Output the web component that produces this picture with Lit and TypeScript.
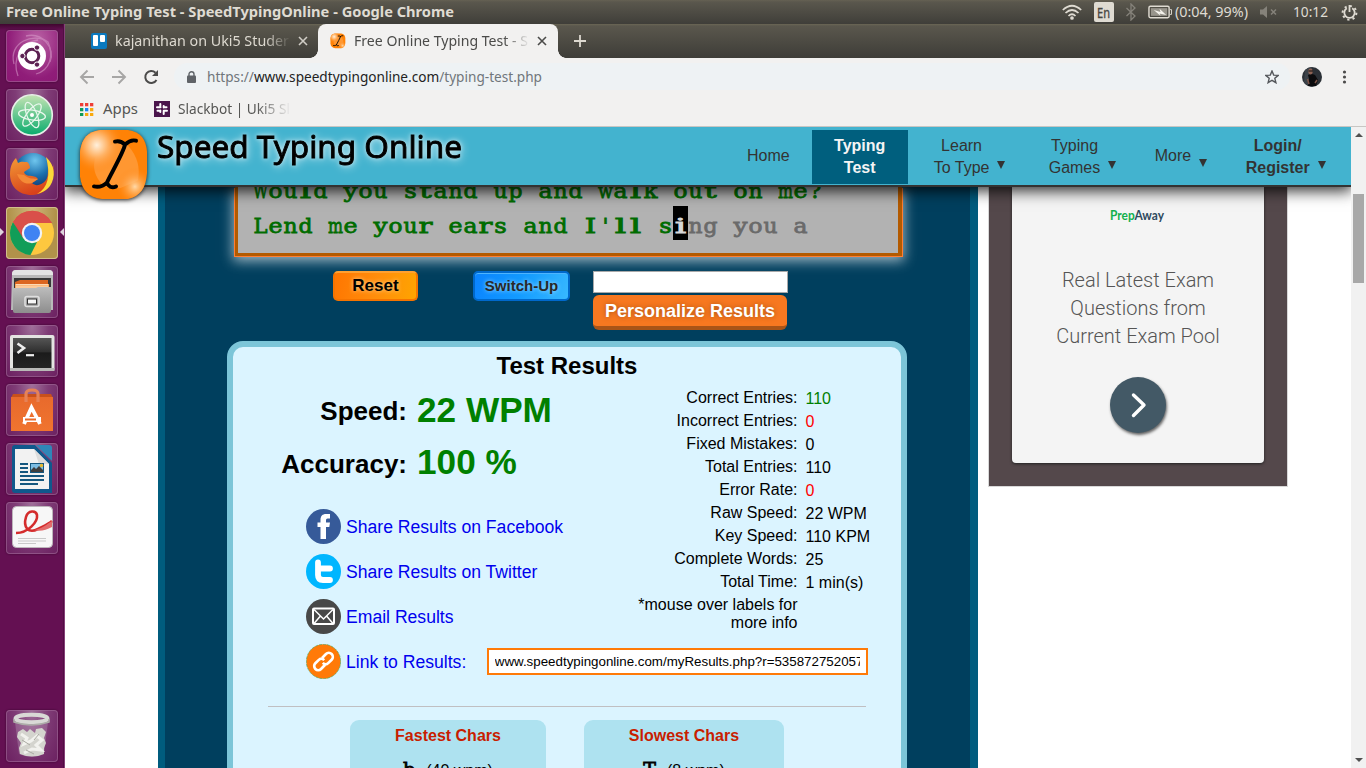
import { LitElement, html, css, svg } from "lit";
import { customElement } from "lit/decorators.js";

/** Single line of text set to an exact advance width. */
const fit = (
  text: unknown,
  width: number,
  size: number,
  cls = "",
  height = 24,
  base = 17
) => html`<svg class="fit ${cls}" width=${width + 2} height=${height}>
  <text x="0" y=${base} font-size=${size} textLength=${width} lengthAdjust="spacingAndGlyphs">${text}</text>
</svg>`;

const cursorLogo = (size: number) => html`<svg width=${size} height=${size} viewBox="0 0 72 76" preserveAspectRatio="none">
  <defs>
    <radialGradient id="lg1" cx=".25" cy=".22" r=".4"><stop offset="0" stop-color="#fff0dc"/><stop offset=".4" stop-color="#ffb56a"/><stop offset="1" stop-color="#ff8410" stop-opacity="0"/></radialGradient>
    <radialGradient id="lg2" cx=".82" cy=".82" r=".28"><stop offset="0" stop-color="#ffd9a8"/><stop offset="1" stop-color="#ff8410" stop-opacity="0"/></radialGradient>
  </defs>
  <path d="M22 2H50C63 4 68 12 69 24V46C68 62 62 70 50 73H24C10 71 4 64 2 50V24C4 10 10 4 22 2Z" fill="#ff8206"/>
  <path d="M50 18C60 30 62 40 60 54L42 62L26 60C16 50 14 40 18 28L38 14Z" fill="#ffa348" opacity=".65"/>
  <path d="M22 2H50C63 4 68 12 69 24V46C68 62 62 70 50 73H24C10 71 4 64 2 50V24C4 10 10 4 22 2Z" fill="url(#lg1)"/>
  <path d="M22 2H50C63 4 68 12 69 24V46C68 62 62 70 50 73H24C10 71 4 64 2 50V24C4 10 10 4 22 2Z" fill="url(#lg2)"/>
  <g fill="none" stroke="#000" stroke-width="4" stroke-linecap="round"><path d="M37 14C41 13 45 15 47 17C50 14 54 12 58 13M47 17C46 24 33 47 29 56M16 60C21 61 26 59 29 56C30 60 34 62 38 60"/></g>
</svg>`;

const tileIcons = [
  // dash
  html`<svg viewBox="0 0 52 52"><g fill="none" stroke="#d99ccb" stroke-width="1.3" opacity=".55"><path d="M8 34C2 12 28 2 42 12C48 26 44 40 30 44"/><path d="M12 46C6 30 14 12 32 10M20 6C36 2 50 18 44 32"/></g><circle cx="26" cy="26" r="14" fill="#fff"/><circle cx="26" cy="26" r="6.8" fill="none" stroke="#5c2152" stroke-width="3"/><g fill="#5c2152" stroke="#fff" stroke-width="1"><circle cx="16.4" cy="26" r="2.7"/><circle cx="31" cy="17.6" r="2.7"/><circle cx="31" cy="34.6" r="2.7"/></g></svg>`,
  // atom
  html`<svg viewBox="0 0 52 52"><defs><linearGradient id="at" x2="0" y2="1"><stop stop-color="#c5e4b4"/><stop offset="1" stop-color="#08ab6c"/></linearGradient></defs><circle cx="26" cy="26" r="20.3" fill="url(#at)" stroke="#e8efe8" stroke-width="1.6"/><g fill="none" stroke="#e9f7ed" stroke-width="1.3"><ellipse cx="26" cy="26" rx="13.5" ry="5" transform="rotate(8 26 26)"/><ellipse cx="26" cy="26" rx="13.5" ry="5" transform="rotate(68 26 26)"/><ellipse cx="26" cy="26" rx="13.5" ry="5" transform="rotate(128 26 26)"/></g><circle cx="26" cy="26" r="2" fill="#fff"/></svg>`,
  // firefox
  html`<svg viewBox="0 0 52 52"><defs><radialGradient id="ffb" cx=".55" cy=".2" r=".8"><stop stop-color="#6fc6ee"/><stop offset=".5" stop-color="#1c70ad"/><stop offset="1" stop-color="#0c2c66"/></radialGradient><linearGradient id="ffo" x2=".4" y2="1"><stop stop-color="#f39a35"/><stop offset="1" stop-color="#d8411b"/></linearGradient></defs><circle cx="27" cy="24" r="19" fill="url(#ffb)"/><path d="M47 16C50 32 42 47 26 47C12 47 4 38 4 26C4 19 6 14 10 10L12 15C15 13 18 14 21 14C23 15 24 18 24 20L18 24C19 29 25 27 30 29L32 31L26 35C30 39 36 37 40 32C43 28 42 18 41 11C44 14 46 17 47 20Z" fill="url(#ffo)"/><path d="M40 9C49 17 50 29 44 38C40 43 35 45 31 46C42 40 45 27 40 9Z" fill="#fbd83a"/><path d="M11 26C14 34 20 37 26 35L32 31C28 30 24 32 18 27Z" fill="#f58a36"/></svg>`,
  // chrome
  html`<svg viewBox="0 0 52 52"><circle cx="26" cy="26" r="22" fill="#fdc83f"/><path d="M26 26L15.4 32L7 15A22 22 0 0 1 46 16H26Z" fill="#d74b40"/><path d="M7 15L17 31L26 36L31 35L24.5 48A22 22 0 0 1 7 15Z" fill="#119d58"/><path d="M26 4A22 22 0 0 1 46 16H26C19 16 15 21 15 26L7 15A22 22 0 0 1 26 4Z" fill="#d9504a"/><circle cx="26" cy="26" r="10.2" fill="#f1f3f5"/><circle cx="26" cy="26" r="8" fill="#3f83f3"/></svg>`,
  // files
  html`<svg viewBox="0 0 52 52"><defs><linearGradient id="fi" x2="0" y2="1"><stop stop-color="#bdbdbd"/><stop offset="1" stop-color="#8d8d8d"/></linearGradient></defs><path d="M6 8Q6 4 10 4H43Q47 4 47 8V44H5Z" fill="#b9b9b9"/><path d="M6 8Q6 4 10 4H43Q47 4 47 8V9H6Z" fill="#e4e4e4"/><path d="M8 12H45V24H8Z" fill="#383838"/><path d="M9 16L14 14H42V24H9Z" fill="#db6621"/><path d="M9 18H43V24H9Z" fill="#f9a55a"/><path d="M10 18.8H42M10 21H42" stroke="#fff0dc"/><path d="M7 22H30L32 21H45V45Q45 47 43 47H9Q7 47 7 45Z" fill="url(#fi)"/><rect x="19" y="30.5" width="14" height="10" rx="2" fill="none" stroke="#dedede" stroke-width="1.6"/><rect x="21.5" y="33" width="9" height="5" fill="#f6f6f6" stroke="#333"/></svg>`,
  // terminal
  html`<svg viewBox="0 0 52 52"><defs><linearGradient id="te" x2="0" y2="1"><stop stop-color="#555"/><stop offset=".45" stop-color="#303030"/><stop offset=".5" stop-color="#1b1b1b"/><stop offset="1" stop-color="#242424"/></linearGradient></defs><rect x="4" y="10" width="44.500" height="36" rx="2" fill="#e4e4e2"/><rect x="4" y="43" width="44.500" height="3" fill="#b9b9b7"/><rect x="7" y="13" width="38.500" height="30" fill="url(#te)"/><path d="M11.500 18.500L18 23L11.500 28" fill="none" stroke="#eee" stroke-width="2.600"/><path d="M20 30.200H28" stroke="#eee" stroke-width="2.200"/></svg>`,
  // software
  html`<svg viewBox="0 0 52 52"><defs><linearGradient id="so" x2="0" y2="1"><stop stop-color="#e86a2c"/><stop offset="1" stop-color="#f0742f"/></linearGradient></defs><path d="M7 10H45L47 14V47H5V14Z" fill="#c8501b"/><path d="M5 13H47V47H5Z" fill="url(#so)"/><path d="M20 18V10Q20 6 26 6T32 10V18" fill="none" stroke="#e68257" stroke-width="3.200"/><path d="M18 40L25.500 23.500L34 40" fill="none" stroke="#fff" stroke-width="3.800"/><path d="M17 35.500H35" stroke="#fff" stroke-width="5"/><path d="M19 35.500H30" stroke="#e96a2a" stroke-width="2"/></svg>`,
  // writer
  html`<svg viewBox="0 0 52 52"><path d="M9 2H29L46 20V50H9Q6 50 6 47V5Q6 2 9 2Z" fill="#10588c"/><path d="M30 2H43Q46 2 46 5V18Z" fill="#2f86b8"/><path d="M9 6H28L43 21V46H9Z" fill="#f2f2f2"/><path d="M28 6L43 21H33Z" fill="#dcdcdc"/><g stroke="#15577f" stroke-width="2"><path d="M14 21H22M14 25H22M14 29H22M14 33H38M14 37H38M14 41H32"/></g><rect x="24.500" y="20.500" width="13" height="9" fill="#7cbde4" stroke="#15577f"/><path d="M25 29V27L28 24L30 26L33 23L37 27V29Z" fill="#3e3e3e"/><circle cx="35.500" cy="22.500" r="1.700" fill="#e8b92d"/></svg>`,
  // document viewer
  html`<svg viewBox="0 0 52 52"><rect x="6.500" y="4.500" width="40" height="41" rx="4" fill="#f7f7f7" stroke="#bdb6bb"/><path d="M10 31C22 31 32 20 31 13C30 8 22 8 20 15C17 25 22 32 32 27C38 24 43 22 46 19" fill="none" stroke="#d42c2c" stroke-width="2.600"/><path d="M28 28C36 27 41 22 46 19V25C40 28 34 30 28 28Z" fill="#e36c6c"/><path d="M12 36.500H40M12 39H40M12 41.500H30" stroke="#c9c9c9" stroke-width="1.100"/></svg>`,
];

const trashIcon = html`<svg viewBox="0 0 52 52"><path d="M9 12L13 44Q26 50 38 44L42 12Z" fill="#c9b4c9" opacity=".28"/><path d="M12 22L17 19L21 22L24 19L29 23L30 19L36 18L40 22L38 28L40 33L38 38L38 44Q26 49 14 44L13 38L15 33L11 27Z" fill="#d4d4ce"/><path d="M15 24L21 28L18 34L25 31L31 26L36 30L30 35L35 40L26 39L18 43" fill="none" stroke="#f2f2ee" stroke-width="3"/><path d="M16 30L24 35M33 24L28 30M20 40L28 44" stroke="#aaaaa2"/><ellipse cx="25.500" cy="8.500" rx="16" ry="3.800" fill="none" stroke="#d9d9d6" stroke-width="4"/><path d="M8 9V12Q25 18 43 12V9" fill="none" stroke="#adada9" stroke-width="1.500"/></svg>`;

@customElement("desktop-panel")
class DesktopPanel extends LitElement {
  static styles = css`
    :host { display: flex; align-items: center; height: 24px; box-sizing: border-box; padding: 0 8px 0 6px;
      background: linear-gradient(#656153 0, #5a574d 2px, #3f3e39); color: #dfdbd2; font: 15px "Noto Sans", sans-serif; }
    svg { display: block; flex: none; }
    .fit { fill: #dfdbd2; overflow: visible; }
    .title { font-weight: 700; }
    .space { flex: 1; }
    .lang { width: 20px; height: 20px; border-radius: 2px; background: #dfdbd2; margin: 0 11px 0 12px; }
    .lang .fit { fill: #47453f; margin-left: 3px; stroke: #47453f; stroke-width: .3px; }
    .battery { margin: 0 3px 0 11px; }
    .mute { margin: 0 14px 0 9px; }
    .gear { margin-left: 11px; }
  `;
  render() {
    return html`${fit("Free Online Typing Test - SpeedTypingOnline - Google Chrome", 448, 15, "title")}
      <div class="space"></div>
      <svg width="20" height="16" viewBox="0 0 20 16" fill="none" stroke="#dfdbd2" stroke-width="1.7"><path d="M.8 6Q10-2.500 19.200 6M3.500 9Q10 3 16.500 9M6.500 12Q10 8.500 13.500 12"/><circle cx="10" cy="14" r="1" fill="#dfdbd2"/></svg>
      <div class="lang">${fit("En", 13, 14, "", 20, 15.5)}</div>
      <svg width="12" height="18" viewBox="0 0 12 18" fill="none" stroke="#85827a" stroke-width="1.300"><path d="M1.500 5L10 13L6 17V1L10 5L1.500 13"/></svg>
      <svg class="battery" width="24" height="14" viewBox="0 0 25 14"><rect x="1" y="1" width="21" height="12" rx="1.500" fill="none" stroke="#dfdbd2" stroke-width="1.500"/><path d="M23 4.500H24.500V9.500H23" fill="none" stroke="#dfdbd2"/><rect x="3" y="3" width="17" height="8" fill="#98958c"/><path d="M6 5L13 7L12 3.500L19 10L12 8.500L13 11Z" fill="#f4f2ec"/></svg>
      ${fit("(0:04, 99%)", 73, 15)}
      <svg class="mute" width="20" height="14" viewBox="0 0 20 14"><path d="M1 4.500H4L8 1V13L4 9.500H1Z" fill="#85827a"/><path d="M12 4.500L17 9.500M17 4.500L12 9.500" stroke="#85827a" stroke-width="1.500"/></svg>
      ${fit("10:12", 35, 15)}
      <svg class="gear" width="17" height="17" viewBox="0 0 17 17" fill="none" stroke="#dfdbd2"><path d="M5.800 4.300A5.200 5.200 0 1 0 11.200 4.300" stroke-width="1.800"/><circle cx="8.500" cy="8.800" r="6.900" stroke-width="2" stroke-dasharray="2.200 3.220"/><path d="M8.500 1V8" stroke-width="1.800"/></svg>`;
  }
}

@customElement("app-launcher")
class AppLauncher extends LitElement {
  static styles = css`
    :host { display: flex; flex-direction: column; gap: 7px; width: 65px; box-sizing: border-box; padding: 6px 0 6px 6px; border-right: 1px solid #863f78;
      background: linear-gradient(#40072f 0, #641052 6px, #641052 100%); box-shadow: inset -1px 0 #510d43; }
    .tile { width: 52px; height: 52px; box-sizing: border-box; border-radius: 4px; position: relative; flex: none;
      background: radial-gradient(ellipse at 50% 0, #a0709a 0, #7f3c76 45%, #6b2060 100%); box-shadow: inset 0 0 0 1px #a36e9a90, 0 0 2px #35062b; }
    .tile svg { display: block; width: 52px; height: 52px; }
    .dash { background: radial-gradient(ellipse at 60% 20%, #ba62a5, #901d79 65%, #8b1773); }
    .active { background: radial-gradient(ellipse at 50% 0, #cfb77d, #b1924a 65%); box-shadow: inset 0 0 0 1px #d1bd8c; }
    .active::before, .active::after { content: ""; position: absolute; top: 21px; border: 4.5px solid transparent; }
    .active::before { left: -6px; border-left-color: #ded4dd; border-right-width: 0; }
    .active::after { right: -6px; border-right-color: #ded4dd; border-left-width: 0; }
    .space { flex: 1; }
  `;
  render() {
    return html`${tileIcons.map((icon, i) => html`<div class="tile ${i === 0 ? "dash" : i === 3 ? "active" : ""}">${icon}</div>`)}
      <div class="space"></div><div class="tile">${trashIcon}</div>`;
  }
}

const closeX = (c: string) => html`<svg width="10" height="10" viewBox="0 0 10 10"><path d="M1 1L9 9M9 1L1 9" stroke=${c} stroke-width="1.600"/></svg>`;

@customElement("browser-chrome")
class BrowserChrome extends LitElement {
  static styles = css`
    :host { display: block; height: 103px; box-sizing: border-box; background: #f2f1f0; border-bottom: 1px solid #c8c6c3; font-family: "Noto Sans", sans-serif; }
    svg { display: block; flex: none; }
    .fit { overflow: visible; }
    .tabs { display: flex; height: 34px; align-items: center; background: linear-gradient(#6b6655 0, #5a574d 2px, #3e3d38); }
    .tab { display: flex; align-items: center; height: 34px; box-sizing: border-box; }
    .idle { width: 253px; padding-left: 26px; fill: #ddd9d0; }
    .clip { overflow: hidden; margin-left: 8px; width: 175px; mask-image: linear-gradient(90deg, #000 150px, transparent 176px); }
    .idle .clip { margin-right: 7px; width: 176px; }
    .current { width: 240px; padding-left: 12px; background: #f2f1f0; border-radius: 8px 8px 0 0; fill: #4b4b49; position: relative; }
    .current .clip { width: 176px; margin-right: 7px; }
    .current::before, .current::after { content: ""; position: absolute; bottom: 0; width: 8px; height: 8px; }
    .current::before { left: -8px; background: radial-gradient(circle at 0 0, transparent 7.5px, #f2f1f0 8px); }
    .current::after { right: -8px; background: radial-gradient(circle at 100% 0, transparent 7.5px, #f2f1f0 8px); }
    .plus { margin-left: 16px; }
    .bar { display: flex; align-items: center; height: 37px; padding-left: 14px; }
    .nav { margin-left: 16px; }
    .omni { display: flex; align-items: center; width: 1116px; height: 27px; box-sizing: border-box; border-radius: 14px; background: #eef2f4; margin-left: 15px; padding: 0 11px 0 13px; fill: #70767b; }
    .omni .fit { margin-left: 11px; }
    .space { flex: 1; }
    .host { fill: #222; }
    .avatar { margin-left: 12px; }
    .dots { margin-left: 20px; }
    .marks { display: flex; align-items: center; height: 28px; padding-left: 15px; fill: #555553; }
    .marks .clip { width: 112px; mask-image: linear-gradient(90deg, #000 78px, transparent 113px); }
    .apps { margin-right: 9px; }
    .slack { margin-left: 14px; }
  `;
  render() {
    const colors = ["#ee3e37", "#ee3e37", "#ee3e37", "#0f9b58", "#1b87f3", "#f9a90d", "#0f9b58", "#f9a90d", "#f9a90d"];
    return html`<div class="tabs">
        <div class="tab idle">
          <svg width="16" height="16"><rect width="16" height="16" rx="2" fill="#0a79bf"/><rect x="2" y="2" width="5" height="11" rx="1" fill="#fff"/><rect x="9" y="2" width="5" height="7" rx="1" fill="#fff"/></svg>
          <div class="clip">${fit("kajanithan on Uki5 Studer", 174, 14.6)}</div>${closeX("#d0cdc6")}
        </div>
        <div class="tab current">${cursorLogo(16)}<div class="clip">${fit("Free Online Typing Test - S", 174, 14.6)}</div>${closeX("#4b4b49")}</div>
        <svg class="plus" width="12" height="12"><path d="M6 0V12M0 6H12" stroke="#ddd9d0" stroke-width="1.800"/></svg>
      </div>
      <div class="bar">
        <svg width="16" height="16" fill="none" stroke="#a7a6a5" stroke-width="1.900"><path d="M15 8H2M8.500 1.500L2 8L8.500 14.500"/></svg>
        <svg class="nav" width="16" height="16" fill="none" stroke="#a7a6a5" stroke-width="1.900"><path d="M1 8H14M7.500 1.500L14 8L7.500 14.500"/></svg>
        <svg class="nav" width="16" height="16"><path d="M13.500 11A6 6 0 1 1 12.500 3.700" fill="none" stroke="#4c4b4a" stroke-width="2"/><path d="M15 1V7H9Z" fill="#4c4b4a"/></svg>
        <div class="omni">
          <svg width="9" height="12"><rect x="0" y="4.500" width="9" height="7.500" rx="1" fill="#5f6368"/><path d="M2 5V3.200A2.500 2.500 0 0 1 7 3.200V5" fill="none" stroke="#5f6368" stroke-width="1.400"/></svg>
          ${fit(svg`https://<tspan class="host">www.speedtypingonline.com</tspan>/typing-test.php`, 335, 14.4)}
          <div class="space"></div>
          <svg width="14" height="14" viewBox="0 0 14 14"><path d="M7 1L8.700 5.100L13.200 5.400L9.800 8.300L10.900 12.700L7 10.300L3.100 12.700L4.200 8.300L.8 5.400L5.300 5.100Z" fill="none" stroke="#54575b" stroke-width="1.400"/></svg>
        </div>
        <svg class="avatar" width="20" height="20"><circle cx="10" cy="10" r="10" fill="#2b3036"/><path d="M3 3Q7 0 10 0V20Q4 18 2 15Z" fill="#3b4148"/><path d="M6 8Q9 6 13 8L16 13L14 19H6L7 12Z" fill="#0b0b0d"/><ellipse cx="8.500" cy="4.500" rx="2.200" ry="2.900" fill="#8d6254"/><path d="M6.500 4H11" stroke="#111"/><path d="M5.500 12L7 17M15 13L13 16" stroke="#7c5347" stroke-width="1.500"/></svg>
        <svg class="dots" width="5" height="14" fill="#4c4b4a"><circle cx="2.500" cy="2" r="1.600"/><circle cx="2.500" cy="7" r="1.600"/><circle cx="2.500" cy="12" r="1.600"/></svg>
      </div>
      <div class="marks">
        <svg class="apps" width="14" height="13">${colors.map((c, i) => svg`<rect x=${(i % 3) * 5} y=${Math.floor(i / 3) * 5} width="3.300" height="3.300" fill=${c}/>`)}</svg>
        ${fit("Apps", 35, 14.6)}
        <svg class="slack" width="16" height="16"><rect width="16" height="16" fill="#4a154b"/><g stroke="#fff" stroke-width="2" stroke-linecap="round"><path d="M6.300 3V6M9.700 5V6.500M6.300 9.500V11M9.700 10V13M3 6.300H6.500M5 9.700H3.500M9.700 6.300H12.500M9.700 9.700H13M6.300 9.700H6.400"/></g></svg>
        <div class="clip">${fit("Slackbot | Uki5 Sl", 112, 14.6)}</div>
      </div>`;
  }
}

@customElement("site-header")
class SiteHeader extends LitElement {
  static styles = css`
    :host { display: flex; position: relative; z-index: 2; height: 60px; box-sizing: border-box; background: #43b3cf; border-bottom: 2px solid #333;
      box-shadow: 0 3px 14px 1px #000000d0; clip-path: inset(0 0 -30px 0); font: 16px/22px "Liberation Sans", Arial, sans-serif; color: #333; }
    .logo { position: absolute; left: 13px; top: 1px; filter: drop-shadow(0 1px 2px #222); }
    .logo svg { display: block; width: 72px; height: 74px; }
    .name { margin: 0 0 0 92px; width: 307px; flex: none; font-family: "Noto Sans", sans-serif; filter: drop-shadow(0 0 2px #ffffff90) drop-shadow(1px 1px 4px #ffffff90); height: 45px; }
    .fit { display: block; overflow: visible; fill: #000; stroke: #000; stroke-width: .9px; }
    nav { display: flex; align-items: center; flex: 1; text-align: center; padding: 2px 0 0 283px; }
    nav > div { flex: none; }
    .home { margin-top: -2px; }
    .on { width: 96px; height: 54px; padding-top: 5px; box-sizing: border-box; background: #005f7e; color: #f4f4f4; font-weight: 700; margin: 0 26px 0 22px; }
    .item { display: flex; align-items: flex-end; white-space: pre; }
    .learn { width: 115px; }
    .games { width: 106px; }
    .more { width: 91px; margin-top: -2px; }
    .arrow { width: 0; height: 0; border: 4.5px solid transparent; border-top: 8px solid #333; border-bottom: 0; margin: 0 0 10px 8px; }
    .low { margin-bottom: 0; }
    .bold { font-weight: 700; }
  `;
  render() {
    return html`<div class="logo">${cursorLogo(72)}</div>
      <div class="name">${fit("Speed Typing Online", 305, 31, "", 45, 31)}</div>
      <nav>
        <div class="home">Home</div>
        <div class="on">Typing<br>Test</div>
        <div class="item learn"><span>Learn<br>To Type</span><i class="arrow"></i></div>
        <div class="item games"><span>Typing<br>Games</span><i class="arrow"></i></div>
        <div class="item more"><span>More</span><i class="arrow low"></i></div>
        <div class="item bold"><span>Login/<br>Register</span><i class="arrow"></i></div>
      </nav>`;
  }
}

const shareRows = [
  { label: "Share Results on Facebook", icon: svg`<circle cx="17.500" cy="17.500" r="17.500" fill="#365a99"/><path d="M14.500 30V18H11.500V13.500H14.500V11C14.500 7 16.500 5 20 5H24V9.500H21.500Q20 9.500 20 11V13.500H24L23.300 18H20V30Z" fill="#fff"/>` },
  { label: "Share Results on Twitter", icon: svg`<circle cx="17.500" cy="17.500" r="17.500" fill="#00b6ff"/><path d="M12 8.500V21Q12 26 17 26H24M12 14.500H24" fill="none" stroke="#fff" stroke-width="5.800" stroke-linecap="round"/>` },
  { label: "Email Results", icon: svg`<circle cx="17.500" cy="17.500" r="17.500" fill="#484848"/><rect x="7" y="9.500" width="21" height="15.500" rx="1" fill="none" stroke="#fff" stroke-width="2"/><path d="M8 10.500L17.500 20L27 10.500M8 24.500L14 17.500M27 24.500L21 17.500" fill="none" stroke="#fff" stroke-width="1.500"/>` },
  { label: "Link to Results:", icon: svg`<circle cx="17.500" cy="17.500" r="17.200" fill="#ff7a08" stroke="#35b070" stroke-width=".6" stroke-dasharray="3 1"/><g fill="none" stroke="#fff" stroke-width="2.700" transform="rotate(-45 17.500 17.500)"><path d="M16 21H10.500A4 4 0 0 1 6.500 17V17A4 4 0 0 1 10.500 13H15Q19 13 19 17M19 14H24.500A4 4 0 0 1 28.500 18V18A4 4 0 0 1 24.500 22H20Q16 22 16 18"/></g>` },
];

const stats: [string, string, string][] = [
  ["Correct Entries:", "110", "good"], ["Incorrect Entries:", "0", "bad"], ["Fixed Mistakes:", "0", ""],
  ["Total Entries:", "110", ""], ["Error Rate:", "0", "bad"], ["Raw Speed:", "22 WPM", ""],
  ["Key Speed:", "110 KPM", ""], ["Complete Words:", "25", ""], ["Total Time:", "1 min(s)", ""],
];

/** Typewriter cell: every character takes 15px, drawn at its own slab width. */
const CELL = 15;
const glyphWidth = (c: string) =>
  "mwWM".includes(c) ? 15 : "ilI?".includes(c) ? 11.5 : c === "'" ? 6 : "ts".includes(c) ? 12.5 : 14;
const typed = (s: string, from = 0) =>
  [...s].map((c, i) => {
    if (c === " ") return svg`<tspan x=${(from + i) * CELL}> </tspan>`;
    const w = glyphWidth(c);
    return svg`<tspan x=${(from + i) * CELL + (CELL - w) / 2} textLength=${w} lengthAdjust="spacingAndGlyphs">${c}</tspan>`;
  });

@customElement("typing-results")
class TypingResults extends LitElement {
  static styles = css`
    :host { display: block; width: 820px; height: 100%; box-sizing: border-box; border: solid #005c7e; border-width: 0 8px 0 7px; background: #003f5e;
      font: 16px "Liberation Sans", Arial, sans-serif; color: #000; }
    .typing { width: 667px; height: 69px; margin-left: 70px; box-sizing: border-box; border: solid #b35a00; border-width: 0 4px 3px 3px; background: #b2b2b2;
      padding-left: 15px; box-shadow: 0 1px 0 #ff7e33, -1px 1px 0 #ff7e33, 1px 1px 0 #ff7e33, 0 3px 12px 2px #ffffffa0; }
    .sheet { display: block; overflow: visible; font: 21px "DejaVu Serif", serif; fill: #006c00; stroke: #006c00; stroke-width: .8px; }
    .rest { fill: #6a6a6a; stroke: #6a6a6a; }
    .under { fill: #d8d8d8; stroke: #d8d8d8; }
    .caret { fill: #000; stroke: none; }
    .actions { display: flex; align-items: flex-start; padding: 15px 0 0 168px; height: 85px; box-sizing: border-box; }
    .btn { box-sizing: border-box; font-weight: 700; text-align: center; border-radius: 5px; }
    .reset { width: 85px; height: 30px; font-size: 17px; line-height: 25px; border: 2px solid #f57400; border-top-color: #ffa030; background: linear-gradient(100deg, #ff7600, #ff8d0c 50%, #ffa400); text-shadow: 0 0 4px #ffd9a0; }
    .switch { width: 97px; height: 30px; margin: 0 23px 0 55px; font-size: 15px; line-height: 26px; color: #282828; border: 2px solid #0069cc; background: linear-gradient(110deg, #0a83ff, #139bff 50%, #38b8ff); text-shadow: 0 0 4px #a8e0ff; box-shadow: inset 0 1px #4eb5ff; }
    .name { width: 195px; height: 22px; box-sizing: border-box; background: #fff; border: 1px solid #a9a9a9; }
    .personalize { width: 194px; height: 35px; margin-top: 2px; background: #f77820; color: #fff; border-bottom: 4px solid #a95417; font-size: 18px; line-height: 32px; text-shadow: 0 0 5px #a95417; border-radius: 6px; }
    .card { width: 680px; height: 460px; margin-left: 62px; box-sizing: border-box; border: 6px solid #7cc5d8; border-radius: 16px; background: #dbf4ff; }
    h1 { margin: 0; font-size: 24px; line-height: 28px; text-align: center; padding-top: 5px; height: 39px; box-sizing: border-box; }
    .cols { display: flex; height: 255px; }
    .left { width: 331px; margin-top: -2px; }
    .score { display: grid; grid-template-columns: 174px 1fr; column-gap: 10px; align-items: baseline; font-weight: 700; font-size: 26px; text-align: right; line-height: 52px; height: 52px; }
    .score span { position: relative; top: -2px; }
    .score + .score span { top: -1px; }
    .score b { font-size: 35.2px; color: #008000; text-align: left; }
    .shares { padding: 21px 0 0 73px; }
    .share { display: flex; align-items: center; gap: 5px; height: 35px; margin-bottom: 10px; font-size: 17.6px; color: #0000ee; white-space: nowrap; }
    .share > span { padding-top: 2px; }
    .share svg { display: block; flex: none; }
    .url { width: 381px; height: 27px; box-sizing: border-box; border: 2px solid #ff7a08; background: #fff; margin-left: 16px; padding: 0 5.5px; font-size: 13.333px; line-height: 23px; color: #000; flex: none; }
    .url span { display: block; overflow: hidden; width: 365.5px; }
    .right { width: 320px; }
    .stat { display: grid; grid-template-columns: 233.5px 1fr; column-gap: 8px; line-height: 23px; height: 23px; text-align: right; }
    .stat span:last-child { text-align: left; padding-top: 1px; }
    .good { color: #008000; } .bad { color: #f00; }
    .note { width: 233.5px; text-align: right; line-height: 18px; padding-top: 3px; }
    .rule { width: 598px; height: 1px; background: #c0bfc2; margin: 65px 0 13px 35px; }
    .panels { display: flex; gap: 38px; padding-left: 117px; }
    .panel { width: 196px; height: 90px; background: #aee2f0; border-radius: 9px; text-align: center; }
    .panel.wide { width: 200px; }
    .panel h2 { margin: 0; font-size: 16px; line-height: 32px; color: #c81e00; }
    .char { display: flex; align-items: baseline; justify-content: center; gap: 11px; padding-top: 3px; line-height: 28px; }
    .char b { font: 19px "DejaVu Serif", serif; -webkit-text-stroke: .8px #000; line-height: 28px; }
  `;
  render() {
    return html`<div class="typing"><svg class="sheet" width="643" height="66">
          <text y="11">${typed("Would you stand up and walk out on me?")}</text>
          <rect class="caret" x="420" y="19" width="15" height="34"/>
          <text y="46">${typed("Lend me your ears and I'll s")}<tspan class="under">${typed("i", 28)}</tspan><tspan class="rest">${typed("ng you a", 29)}</tspan></text>
        </svg></div>
      <div class="actions"><div class="btn reset">Reset</div><div class="btn switch">Switch-Up</div>
        <div><div class="name"></div><div class="btn personalize">Personalize Results</div></div></div>
      <div class="card"><h1>Test Results</h1>
        <div class="cols">
          <div class="left">
            <div class="score"><span>Speed:</span><b>22 WPM</b></div>
            <div class="score"><span>Accuracy:</span><b>100 %</b></div>
            <div class="shares">${shareRows.map((r, i) => html`<div class="share"><svg width="35" height="35">${r.icon}</svg><span>${r.label}</span>${i === 3 ? html`<div class="url"><span>www.speedtypingonline.com/myResults.php?r=535872752057</span></div>` : ""}</div>`)}</div>
          </div>
          <div class="right">${stats.map(([l, v, c]) => html`<div class="stat"><span>${l}</span><span class=${c}>${v}</span></div>`)}
            <div class="note">*mouse over labels for<br>more info</div></div>
        </div>
        <div class="rule"></div>
        <div class="panels">
          <div class="panel"><h2>Fastest Chars</h2><div class="char"><b>b</b><span>(40 wpm)</span></div></div>
          <div class="panel wide"><h2>Slowest Chars</h2><div class="char"><b>T</b><span>(8 wpm)</span></div></div>
        </div>
      </div>`;
  }
}

@customElement("side-ad")
class SideAd extends LitElement {
  static styles = css`
    :host { display: block; width: 298px; height: 299px; box-sizing: border-box; padding: 0 23px 23px; background: #54484b; box-shadow: 0 0 0 1px #d8d8d8; }
    .box { height: 276px; background: #f4f4f4; border-radius: 0 0 4px 4px; box-shadow: 0 1px 3px #222; display: flex; flex-direction: column; align-items: center; font: 300 20px/28px Roboto, sans-serif; color: #555; text-align: center; }
    .fit { display: block; margin-top: 20px; font-family: Lato, sans-serif; font-weight: 700; fill: #2e4a5e; }
    .green { fill: #12b04c; }
    p { margin: 41px 0 27px; height: 84px; }
    .go { width: 56px; height: 56px; border-radius: 50%; background: #435966; box-shadow: 1px 2px 3px #0009; }
    .go svg { display: block; }
  `;
  render() {
    return html`<div class="box">${fit(svg`<tspan class="green">Prep</tspan>Away`, 54, 12.5, "", 18, 13)}
      <p>Real Latest Exam<br>Questions from<br>Current Exam Pool</p>
      <div class="go"><svg width="56" height="56"><path d="M23.500 18L34 28L23.500 38.500" fill="none" stroke="#fff" stroke-width="3.400" stroke-linecap="round" stroke-linejoin="round"/></svg></div></div>`;
  }
}

@customElement("app-root")
class AppRoot extends LitElement {
  static styles = css`
    :host { display: grid; grid-template: 24px 744px / 65px 1301px; width: 1366px; height: 768px; overflow: hidden; background: #fff; }
    desktop-panel { grid-column: 1 / 3; }
    .window { display: grid; grid-template-rows: 103px 641px; min-width: 0; }
    .view { display: grid; grid-template-columns: 1286px 15px; overflow: hidden; height: 641px; }
    .page { display: grid; grid-template-rows: 60px 581px; background: #fff; }
    .content { display: flex; gap: 11px; padding-left: 93px; align-items: flex-start; height: 581px; }
    .scroll { display: flex; flex-direction: column; justify-content: space-between; align-items: center; background: #f1f1f1; padding: 6px 0; }
    .up, .down { border: 4px solid transparent; }
    .up { border-bottom-color: #505050; border-top: 0; }
    .down { border-top-color: #505050; border-bottom: 0; }
    .thumb { width: 11px; height: 89px; background: #a8a8a8; margin: 57px 0 auto; }
  `;
  render() {
    return html`<desktop-panel></desktop-panel><app-launcher></app-launcher>
      <div class="window"><browser-chrome></browser-chrome>
        <div class="view">
          <div class="page"><site-header></site-header><div class="content"><typing-results></typing-results><side-ad></side-ad></div></div>
          <div class="scroll"><div class="up"></div><div class="thumb"></div><div class="down"></div></div>
        </div>
      </div>`;
  }
}
